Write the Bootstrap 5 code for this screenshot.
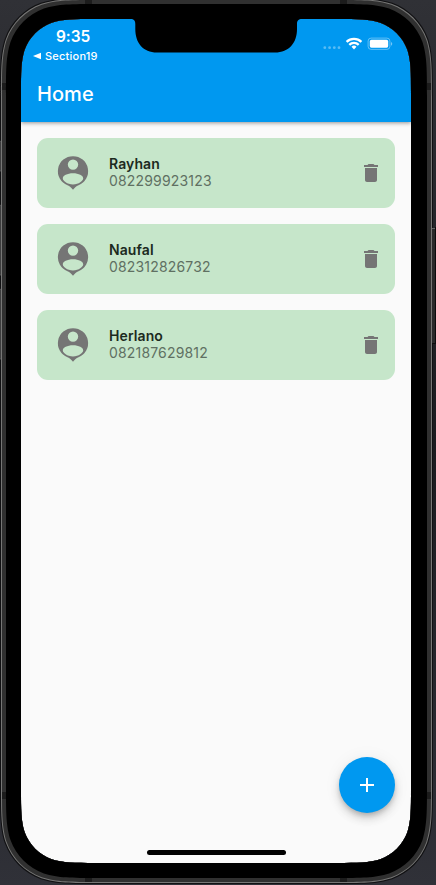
<!DOCTYPE html>
<html lang="en">
<head>
<meta charset="utf-8">
<meta name="viewport" content="width=device-width, initial-scale=1">
<title>Home</title>
<link href="https://cdn.jsdelivr.net/npm/bootstrap@5.3.0/dist/css/bootstrap.min.css" rel="stylesheet">
<style>
html,body{height:885px;overflow:hidden}
body{font-family:Inter,"Liberation Sans",sans-serif;background:#2c2d33;-webkit-font-smoothing:antialiased}
.device{width:436px;height:885px;padding:19px 25px 22px 21px}
.bezel{left:0;top:0;z-index:5;pointer-events:none}
.screen{height:844px;background:#fafafa}
.app-header{height:103px;background:#0098f0;box-shadow:0 1px 4px rgba(0,0,0,.42);z-index:1}
.status{height:47px;padding:10px 17px 0 12px}
.clock{font-size:15.5px;font-weight:600;line-height:16px;padding-left:23px;letter-spacing:-.1px}
.back{font-size:11px;font-weight:500;line-height:14px;margin-top:4px;letter-spacing:.22px}
.signals{margin-top:8px}
.app-title{height:56px;font-size:20px;font-weight:500;letter-spacing:.05px}
.contact{height:70px;border-radius:11px;background:#c6e6ca;padding:0 12px 0 18px}
.contact-name{font-size:14px;font-weight:600;line-height:17px;color:#1c2a1e;letter-spacing:.1px}
.contact-phone{font-size:14px;line-height:17px;color:#5f7062;letter-spacing:.17px}
.info{margin-left:18px;padding-bottom:2px}
.fab{width:56px;height:56px;background:#0098f0;box-shadow:0 3px 5px -1px rgba(0,0,0,.2),0 6px 10px rgba(0,0,0,.14),0 1px 18px rgba(0,0,0,.06)}
.home-bar{width:139px;height:5px;background:#000;margin:37px auto 8px}
</style>
<script src="https://cdn.jsdelivr.net/npm/bootstrap@5.3.0/dist/js/bootstrap.bundle.min.js"></script>
</head>
<body>
<svg width="0" height="0" class="position-absolute" aria-hidden="true">
  <symbol id="person" viewBox="0 0 36 36"><path fill="#757575" fill-rule="evenodd" d="M18 1.200a15 15 0 0 0-5.500 29c2.300.9 3.600 2.300 5.500 4.500 1.900-2.200 3.200-3.600 5.500-4.500A15 15 0 0 0 18 1.200zM18 4.400a5.200 5.200 0 1 1 0 10.400a5.200 5.200 0 0 1 0-10.400zM18 18.300c5.800 0 10.200 2.300 10.200 5.100 0 2.200-4.400 6-10.200 6s-10.200-3.800-10.200-6c0-2.800 4.400-5.100 10.200-5.100z"/></symbol>
  <symbol id="trash" viewBox="0 0 24 24"><path fill="#757575" d="M6 19c0 1.100.9 2 2 2h8c1.100 0 2-.9 2-2V7H6v12zM19 4h-3.500l-1-1h-5l-1 1H5v2h14V4z"/></symbol>
</svg>
<div class="device position-relative">
  <main class="screen d-flex flex-column">
    <header class="app-header position-relative text-white">
      <div class="status d-flex justify-content-between align-items-start">
        <div>
          <div class="clock">9:35</div>
          <div class="back d-flex align-items-center"><svg width="8" height="8" viewBox="0 0 8 8" class="me-1"><path fill="#fff" d="M0 4 8 .7v6.600z"/></svg>Section19</div>
        </div>
        <svg class="signals" width="72" height="14" viewBox="322 37 72 14">
          <g fill="#fff" opacity=".35"><circle cx="324.800" cy="47.700" r="1.400"/><circle cx="329.600" cy="47.700" r="1.400"/><circle cx="334.300" cy="47.700" r="1.400"/><circle cx="339" cy="47.700" r="1.400"/></g>
          <g fill="none" stroke="#fff" stroke-width="2.300"><path d="M346.600 41.800a10.700 10.700 0 0 1 14.800 0"/><path d="M349.300 44.900a6.700 6.700 0 0 1 9.400 0"/></g>
          <path fill="#fff" d="M351.500 46.800a3.600 3.600 0 0 1 5 0L354 49.400z"/>
          <rect x="368.100" y="38.100" width="21.800" height="11.300" rx="3" fill="none" stroke="#fff" stroke-opacity=".38"/>
          <rect x="369.800" y="39.800" width="18.400" height="7.900" rx="1.600" fill="#fff"/>
          <path d="M391 42v3.700a2 2 0 0 0 0-3.700z" fill="#fff" opacity=".45"/>
        </svg>
      </div>
      <h1 class="app-title mb-0 px-3 d-flex align-items-center">Home</h1>
    </header>
    <section class="d-flex flex-column gap-3 p-3">
      <article class="contact d-flex align-items-center">
        <svg width="36" height="36"><use href="#person"/></svg>
        <div class="info flex-grow-1"><div class="contact-name">Rayhan</div><div class="contact-phone">082299923123</div></div>
        <svg width="24" height="24"><use href="#trash"/></svg>
      </article>
      <article class="contact d-flex align-items-center">
        <svg width="36" height="36"><use href="#person"/></svg>
        <div class="info flex-grow-1"><div class="contact-name">Naufal</div><div class="contact-phone">082312826732</div></div>
        <svg width="24" height="24"><use href="#trash"/></svg>
      </article>
      <article class="contact d-flex align-items-center">
        <svg width="36" height="36"><use href="#person"/></svg>
        <div class="info flex-grow-1"><div class="contact-name">Herlano</div><div class="contact-phone">082187629812</div></div>
        <svg width="24" height="24"><use href="#trash"/></svg>
      </article>
    </section>
    <footer class="mt-auto">
      <div class="d-flex justify-content-end px-3">
        <button class="fab btn border-0 rounded-circle p-0 d-flex align-items-center justify-content-center" aria-label="Add"><svg width="24" height="24"><path fill="#fff" d="M19 13h-6v6h-2v-6H5v-2h6V5h2v6h6z"/></svg></button>
      </div>
      <div class="home-bar rounded-pill"></div>
    </footer>
  </main>
  <svg id="bezel" class="bezel position-absolute" width="436" height="885" aria-hidden="true"></svg>
</div>
<script>
// Continuous-curvature rounded rectangle, as used on phone hardware.
function squircle(x, y, w, h, r) {
  const a = 1.52866*r, b = 1.08849*r, c = .8684*r, d = .63149*r, e = .07491*r, f = .37282*r, g = .16905*r, R = x+w, B = y+h;
  return `M${x+a} ${y}H${R-a}C${R-b} ${y} ${R-c} ${y} ${R-d} ${y+e}C${R-f} ${y+g} ${R-g} ${y+f} ${R-e} ${y+d}C${R} ${y+c} ${R} ${y+b} ${R} ${y+a}` +
    `V${B-a}C${R} ${B-b} ${R} ${B-c} ${R-e} ${B-d}C${R-g} ${B-f} ${R-f} ${B-g} ${R-d} ${B-e}C${R-c} ${B} ${R-b} ${B} ${R-a} ${B}` +
    `H${x+a}C${x+b} ${B} ${x+c} ${B} ${x+d} ${B-e}C${x+f} ${B-g} ${x+g} ${B-f} ${x+e} ${B-d}C${x} ${B-c} ${x} ${B-b} ${x} ${B-a}` +
    `V${y+a}C${x} ${y+b} ${x} ${y+c} ${x+e} ${y+d}C${x+g} ${y+f} ${x+f} ${y+g} ${x+d} ${y+e}C${x+c} ${y} ${x+b} ${y} ${x+a} ${y}Z`;
}
const hole = squircle(21, 19, 390, 844, 48.5);
const ring = (x, y, w, h, r, fill) => `<path fill-rule="evenodd" fill="${fill}" d="${squircle(x, y, w, h, r)}${hole}"/>`;
document.getElementById('bezel').innerHTML =
  `<defs><linearGradient id="wall" x2="0" y2="1"><stop offset="0" stop-color="#303136"/><stop offset=".5" stop-color="#1b1b1f"/><stop offset="1" stop-color="#303138"/></linearGradient></defs>` +
  `<path fill="url(#wall)" fill-rule="evenodd" d="M0 0H436V885H0Z${hole}"/>` +
  ring(0, -2, 433, 886, 64.5, '#111113') +
  `<path fill="#2a2a2b" stroke="#616161" stroke-width=".7" d="M-1 141.300H1V171H-1zM-1 205.300H1V275H-1zM-1 289.300H1V359H-1z"/>` +
  `<path fill="#2a2a2b" d="M432 228H435V343H432z"/><path fill="#666" d="M432 228h3v1h-3z"/><path fill="#0c0c0d" d="M435 227h1v117h-4v-1h3z"/>` +
  ring(1, -1, 431, 884, 64, '#777776') +
  ring(2, 0, 429, 882, 63, '#303030') +
  `<path fill="#1c1c1c" d="M85 0h7v4h-7zM340 0h7v4h-7zM85 878h7v4h-7zM340 878h7v4h-7zM2 83h4v7H2zM427 83h4v7h-4zM2 792h4v7H2zM427 792h4v7h-4z"/>` +
  ring(6, 4, 421, 874, 60, '#000') +
  `<path d="M130 19h.5C134 19 135.300 20.500 135.300 24V29C135.300 43 143 52.500 157 52.500H275C289 52.500 297 43 297 29V24C297 20.500 298.500 19 302 19V18H130z"/>`;
</script>
</body>
</html>
